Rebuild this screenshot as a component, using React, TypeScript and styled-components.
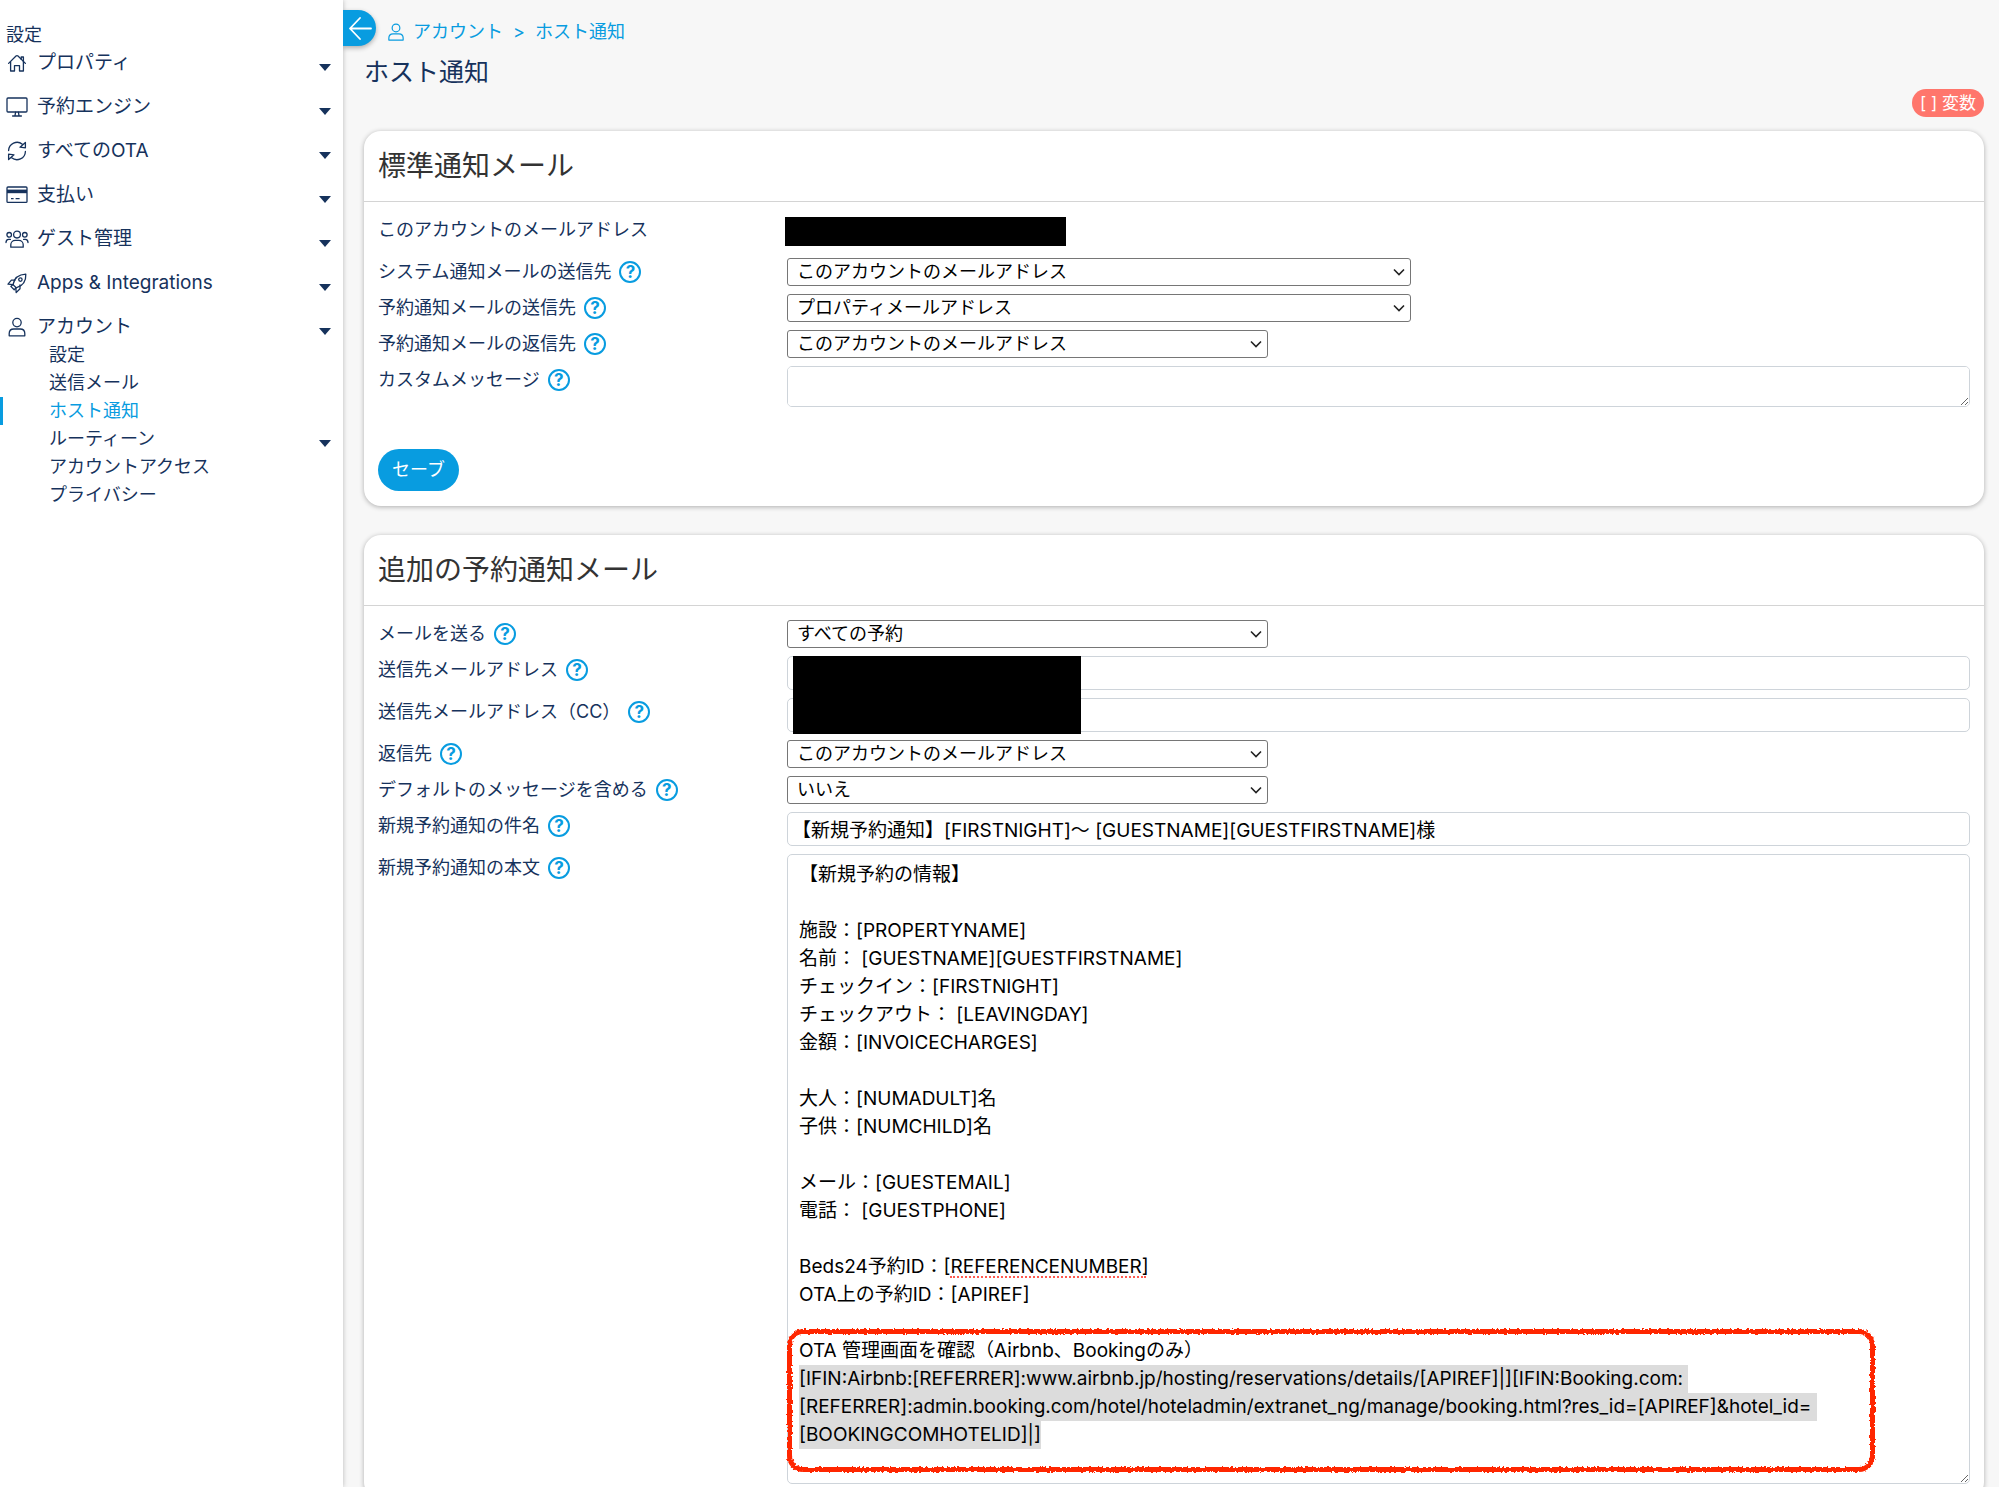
import React, { useEffect, useRef } from 'react';
import styled, { createGlobalStyle } from 'styled-components';

const color = {
  blue: '#089ce0',
  navy: '#16325c',
  page: '#f7f7f7',
  line: '#d4d4d4',
  fieldLine: '#ced4da',
  coral: '#ff766c',
};

const font = 'Inter, "Noto Sans CJK JP", sans-serif';

const GlobalStyle = createGlobalStyle`
  *, *::before, *::after { box-sizing: border-box; }
  body { margin: 0; background: ${color.page}; color: ${color.navy}; font: 18px/28px ${font}; }
  button, input, select, textarea { font: inherit; color: inherit; margin: 0; }
  a { color: inherit; text-decoration: none; }
  ul, ol { list-style: none; margin: 0; padding: 0; }
  h1, h2 { margin: 0; font-weight: 400; }
`;

/* ---------- icons ---------- */

const IconBox = styled.svg<{ $size: number }>`
  display: block;
  flex: none;
  width: ${(p) => p.$size}px;
  height: ${(p) => p.$size}px;
  fill: none;
  stroke: currentColor;
  stroke-width: 1.3;
  stroke-linecap: round;
  stroke-linejoin: round;
`;

type IconName = 'house' | 'display' | 'repeat' | 'card' | 'people' | 'rocket' | 'person';

const iconShapes: Record<IconName, React.ReactNode> = {
  house: (
    <>
      <path d="M3.6 12.4 11 5a1.4 1.4 0 0 1 2 0l7.4 7.4" />
      <path d="M5.6 10.8v9.2h3.9v-5.4h5v5.4h3.9v-9.2" />
      <path d="M16.2 8.2V6h2.2v4.4" />
    </>
  ),
  display: (
    <>
      <rect x="2" y="3" width="20" height="14" rx="1" />
      <path d="M10.6 17.2 10 20.6M13.4 17.2l.6 3.4M7.6 21h8.8" />
    </>
  ),
  repeat: (
    <>
      <path d="M3.6 11.6A8.5 8.5 0 0 1 17.4 5.2" />
      <path d="M20.4 3.4v5.4l-5.4-.6z" />
      <path d="M20.4 12.4A8.5 8.5 0 0 1 6.6 18.8" />
      <path d="M3.6 20.6v-5.4l5.4.6z" />
    </>
  ),
  card: (
    <>
      <rect x="2" y="4" width="20" height="15.4" rx="1" />
      <path d="M2 8.4h20" strokeWidth="3.6" strokeLinecap="butt" />
      <path d="M6 15.6h2.6M10.6 15.6h4" strokeLinecap="butt" />
    </>
  ),
  people: (
    <>
      <circle cx="12" cy="7.6" r="3.4" />
      <path d="M5.8 20.2v-2.4c0-2.6 2-4.4 4.4-4.4h3.6c2.4 0 4.4 1.8 4.4 4.4v2.4z" />
      <circle cx="4.2" cy="7.8" r="2.3" />
      <circle cx="19.8" cy="7.8" r="2.3" />
      <path d="M1 15.6c0-2 1-3.2 2.6-3.2h1.8M23 15.6c0-2-1-3.2-2.6-3.2h-1.8" />
    </>
  ),
  rocket: (
    <>
      <path d="M8 13.6C9 8 12.8 3.6 20.8 3.200c.4 8-4 12-9.600 13.600z" />
      <circle cx="15.400" cy="8.600" r="1.700" />
      <path d="M10 9.200H6.400L3 13.200l5 .4M15 14v3.800L11.200 21.600l-.4-5" />
      <path d="M8 13.600l-2.200 1.800 3.400 3.400 2-2.200" />
    </>
  ),
  person: (
    <>
      <circle cx="12" cy="7.600" r="4.200" />
      <path d="M4.200 20.800v-2.200c0-2.800 2-4.600 4.600-4.600h6.400c2.600 0 4.600 1.800 4.600 4.600v2.200z" />
    </>
  ),
};

const Icon = ({ name, size = 24 }: { name: IconName; size?: number }) => (
  <IconBox viewBox="0 0 24 24" $size={size} aria-hidden="true">
    {iconShapes[name]}
  </IconBox>
);

/* ---------- shell ---------- */

const Shell = styled.div`
  display: flex;
  height: 100vh;
  overflow: hidden;
`;

const Sidebar = styled.nav`
  flex: none;
  width: 343px;
  padding-top: 21px;
  background: #fff;
  box-shadow: 0 0 5px rgba(0, 0, 0, 0.25);
  font-size: 19px;
`;

const SidebarTitle = styled.div`
  padding-left: 6px;
  font-size: 18px;
`;

const NavList = styled.ul`
  display: grid;
  gap: 16px;
`;

const NavButton = styled.button`
  display: flex;
  align-items: center;
  gap: 8px;
  width: 100%;
  padding: 0 12px 0 5px;
  border: 0;
  background: none;
  line-height: 28px;
  text-align: left;
  cursor: pointer;
`;

const NavLink = styled.a<{ $active?: boolean }>`
  display: flex;
  align-items: center;
  padding: 0 12px 0 46px;
  border-left: 3px solid ${(p) => (p.$active ? color.blue : 'transparent')};
  color: ${(p) => (p.$active ? color.blue : 'inherit')};
  font-size: 18px;
`;

const Caret = styled.span`
  margin: 8px 0 0 auto;
  border: 6px solid transparent;
  border-top: 7px solid ${color.navy};
  border-bottom: 0;
`;

const Main = styled.main`
  flex: 1;
  min-width: 0;
  padding-top: 10px;
  overflow-y: auto;
  scrollbar-width: none;
`;

const TopBar = styled.header`
  display: flex;
  align-items: flex-start;
  gap: 9px;
`;

const CollapseButton = styled.button`
  display: grid;
  place-items: center;
  width: 33px;
  height: 36px;
  padding: 0;
  border: 0;
  border-radius: 0 18px 18px 0;
  background: ${color.blue};
  color: #fff;
  box-shadow: 0 2px 5px rgba(0, 0, 0, 0.3);
  cursor: pointer;
`;

const Breadcrumb = styled.nav`
  display: flex;
  align-items: center;
  gap: 6px;
  padding-top: 8px;
  color: ${color.blue};
`;

const Separator = styled.span`
  padding: 0 4px;
`;

const Content = styled.div`
  padding: 9px 15px 0 21px;
`;

const PageTitle = styled.h1`
  font-size: 25px;
  line-height: 34px;
`;

const Tools = styled.div`
  display: flex;
  justify-content: flex-end;
`;

const VariablesButton = styled.button`
  padding: 0 8px;
  border: 0;
  border-radius: 14px;
  background: ${color.coral};
  color: #fff;
  font-size: 17px;
  line-height: 28px;
  cursor: pointer;
`;

/* ---------- cards and form rows ---------- */

const Card = styled.section`
  margin: 14px 0 29px;
  border-radius: 17px;
  background: #fff;
  box-shadow: 0 1px 5px rgba(0, 0, 0, 0.3);
`;

const CardTitle = styled.h2`
  padding: 0 14px;
  border-bottom: 1px solid ${color.line};
  color: #333;
  font-size: 28px;
  line-height: 70px;
`;

const Form = styled.form`
  display: grid;
  gap: 8px;
  padding: 14px 14px 15px;
`;

const FormRow = styled.div`
  display: grid;
  grid-template-columns: 400px minmax(0, 1fr);
  column-gap: 9px;
  align-items: start;
`;

const LabelCell = styled.div`
  display: flex;
  align-items: center;
  gap: 8px;
`;

const HelpButton = styled.button`
  display: grid;
  place-items: center;
  width: 22px;
  height: 22px;
  padding: 0;
  border: 2px solid ${color.blue};
  border-radius: 50%;
  background: none;
  color: ${color.blue};
  font-size: 17px;
  font-weight: 700;
  line-height: 18px;
  cursor: pointer;
`;

const SelectBox = styled.span<{ $wide?: boolean }>`
  position: relative;
  display: block;
  width: ${(p) => (p.$wide ? 624 : 481)}px;
  max-width: 100%;
  color: #000;
`;

const Select = styled.select`
  display: block;
  width: 100%;
  height: 28px;
  padding: 0 28px 0 9px;
  appearance: none;
  border: 1px solid #767676;
  border-radius: 3px;
  background: #fff;
  line-height: 26px;
`;

const Chevron = styled.svg`
  position: absolute;
  top: 10px;
  right: 6px;
  width: 12px;
  height: 9px;
  fill: none;
  stroke: #222;
  stroke-width: 1.6;
  pointer-events: none;
`;

const TextInput = styled.input`
  display: block;
  width: 100%;
  height: 34px;
  padding: 0 4px 2px;
  border: 1px solid ${color.fieldLine};
  border-radius: 5px;
  background: #fff;
  color: #000;
  font-size: 19px;
`;

const TextBox = styled.textarea<{ $height: number }>`
  display: block;
  width: 100%;
  height: ${(p) => p.$height}px;
  padding: 6px 11px;
  border: 1px solid ${color.fieldLine};
  border-radius: 5px;
  outline: none;
  background: #fff;
  color: #000;
  caret-color: transparent;
  font-size: 19px;
  line-height: 28px;
  resize: vertical;

  &::selection {
    background: #dcdcdc;
    color: #000;
  }
`;

const Overlaid = styled.div`
  position: relative;
`;

const AccountMask = styled.div`
  width: 281px;
  height: 29px;
  margin: 1px 0 4px -2px;
  background: #000;
`;

const EmailFields = styled.div`
  position: relative;
  display: grid;
  gap: 8px;
`;

const EmailMask = styled.div`
  position: absolute;
  top: 0;
  left: 415px;
  width: 288px;
  height: 78px;
  background: #000;
`;

const SpellingMark = styled.span`
  position: absolute;
  top: 422px;
  left: 163px;
  width: 196px;
  border-top: 2px dotted #ff5a50;
  pointer-events: none;
`;

const MarkerFrame = styled.span`
  position: absolute;
  right: 95px;
  bottom: 12px;
  left: 0;
  height: 143px;
  border: 5px solid #ff2600;
  border-radius: 16px;
  filter: url(#marker-edge);
  pointer-events: none;
`;

const FilterDefs = styled.svg`
  position: absolute;
  width: 0;
  height: 0;
`;

const Actions = styled.div`
  padding-top: 34px;
`;

const SaveButton = styled.button`
  height: 42px;
  padding: 0 14px;
  border: 0;
  border-radius: 21px;
  background: ${color.blue};
  color: #fff;
  cursor: pointer;
`;

/* ---------- content ---------- */

const sections: { icon: IconName; label: string }[] = [
  { icon: 'house', label: 'プロパティ' },
  { icon: 'display', label: '予約エンジン' },
  { icon: 'repeat', label: 'すべてのOTA' },
  { icon: 'card', label: '支払い' },
  { icon: 'people', label: 'ゲスト管理' },
  { icon: 'rocket', label: 'Apps & Integrations' },
];

const accountPages = [
  { label: '設定' },
  { label: '送信メール' },
  { label: 'ホスト通知', active: true },
  { label: 'ルーティーン', more: true },
  { label: 'アカウントアクセス' },
  { label: 'プライバシー' },
];

const ACCOUNT_EMAIL = 'このアカウントのメールアドレス';
const PROPERTY_EMAIL = 'プロパティメールアドレス';

const messageIntro = [
  '【新規予約の情報】',
  '',
  '施設：[PROPERTYNAME]',
  '名前： [GUESTNAME][GUESTFIRSTNAME]',
  'チェックイン：[FIRSTNIGHT]',
  'チェックアウト： [LEAVINGDAY]',
  '金額：[INVOICECHARGES]',
  '',
  '大人：[NUMADULT]名',
  '子供：[NUMCHILD]名',
  '',
  'メール：[GUESTEMAIL]',
  '電話： [GUESTPHONE]',
  '',
  'Beds24予約ID：[REFERENCENUMBER]',
  'OTA上の予約ID：[APIREF]',
  '',
  'OTA 管理画面を確認（Airbnb、Bookingのみ）',
  '',
].join('\n');

const messageLinks = [
  '[IFIN:Airbnb:[REFERRER]:www.airbnb.jp/hosting/reservations/details/[APIREF]|][IFIN:Booking.com:',
  '[REFERRER]:admin.booking.com/hotel/hoteladmin/extranet_ng/manage/booking.html?res_id=[APIREF]&hotel_id=',
  '[BOOKINGCOMHOTELID]|]',
].join('\n');

const message = messageIntro + messageLinks;

type FieldProps = { id: string; label: string; children: React.ReactNode };

const Field = ({ id, label, children }: FieldProps) => (
  <FormRow>
    <LabelCell>
      <label htmlFor={id}>{label}</label>
      <HelpButton type="button" aria-label={`${label} ヘルプ`}>
        ?
      </HelpButton>
    </LabelCell>
    {children}
  </FormRow>
);

const SelectField = ({
  id,
  label,
  options,
  wide,
}: {
  id: string;
  label: string;
  options: string[];
  wide?: boolean;
}) => (
  <Field id={id} label={label}>
    <SelectBox $wide={wide}>
      <Select id={id} defaultValue={options[0]}>
        {options.map((option) => (
          <option key={option}>{option}</option>
        ))}
      </Select>
      <Chevron viewBox="0 0 12 9" aria-hidden="true">
        <path d="M1 1.500 6 6.500l5-5" />
      </Chevron>
    </SelectBox>
  </Field>
);

const MessageBody = () => {
  const ref = useRef<HTMLTextAreaElement>(null);

  useEffect(() => {
    ref.current?.focus({ preventScroll: true });
    ref.current?.setSelectionRange(messageIntro.length, message.length);
  }, []);

  return (
    <Overlaid>
      <TextBox id="body" ref={ref} $height={630} defaultValue={message} />
      <SpellingMark />
      <MarkerFrame />
      <FilterDefs aria-hidden="true">
        <filter id="marker-edge" x="-2%" y="-6%" width="104%" height="112%">
          <feTurbulence type="fractalNoise" baseFrequency="0.4" numOctaves="2" seed="4" />
          <feDisplacementMap in="SourceGraphic" scale="4" xChannelSelector="R" yChannelSelector="G" />
        </filter>
      </FilterDefs>
    </Overlaid>
  );
};

export default function App() {
  return (
    <>
      <GlobalStyle />
      <Shell>
        <Sidebar aria-label="設定">
          <SidebarTitle>設定</SidebarTitle>
          <NavList>
            {sections.map((section) => (
              <li key={section.label}>
                <NavButton type="button">
                  <Icon name={section.icon} />
                  {section.label}
                  <Caret />
                </NavButton>
              </li>
            ))}
            <li>
              <NavButton type="button" aria-expanded="true">
                <Icon name="person" />
                アカウント
                <Caret />
              </NavButton>
              <ul>
                {accountPages.map((page) => (
                  <li key={page.label}>
                    <NavLink href="#" $active={page.active}>
                      {page.label}
                      {page.more && <Caret />}
                    </NavLink>
                  </li>
                ))}
              </ul>
            </li>
          </NavList>
        </Sidebar>

        <Main>
          <TopBar>
            <CollapseButton type="button" aria-label="メニューを閉じる">
              <IconBox viewBox="0 0 24 24" $size={24} aria-hidden="true">
                <path d="M23 12.500H2M12 2 2 12.500 12 23" strokeWidth="1.800" />
              </IconBox>
            </CollapseButton>
            <Breadcrumb aria-label="パンくず">
              <Icon name="person" size={22} />
              <a href="#">アカウント</a>
              <Separator>&gt;</Separator>
              <a href="#">ホスト通知</a>
            </Breadcrumb>
          </TopBar>

          <Content>
            <PageTitle>ホスト通知</PageTitle>
            <Tools>
              <VariablesButton type="button">[ ] 変数</VariablesButton>
            </Tools>

            <Card>
              <CardTitle>標準通知メール</CardTitle>
              <Form>
                <FormRow>
                  <LabelCell>このアカウントのメールアドレス</LabelCell>
                  <AccountMask />
                </FormRow>
                <SelectField
                  id="system-to"
                  label="システム通知メールの送信先"
                  options={[ACCOUNT_EMAIL, PROPERTY_EMAIL]}
                  wide
                />
                <SelectField
                  id="booking-to"
                  label="予約通知メールの送信先"
                  options={[PROPERTY_EMAIL, ACCOUNT_EMAIL]}
                  wide
                />
                <SelectField
                  id="booking-reply"
                  label="予約通知メールの返信先"
                  options={[ACCOUNT_EMAIL, PROPERTY_EMAIL]}
                />
                <Field id="custom" label="カスタムメッセージ">
                  <TextBox id="custom" $height={41} />
                </Field>
                <Actions>
                  <SaveButton type="button">セーブ</SaveButton>
                </Actions>
              </Form>
            </Card>

            <Card>
              <CardTitle>追加の予約通知メール</CardTitle>
              <Form>
                <SelectField id="send" label="メールを送る" options={['すべての予約']} />
                <EmailFields>
                  <Field id="to" label="送信先メールアドレス">
                    <TextInput id="to" type="email" />
                  </Field>
                  <Field id="cc" label="送信先メールアドレス（CC）">
                    <TextInput id="cc" type="email" />
                  </Field>
                  <EmailMask />
                </EmailFields>
                <SelectField id="reply" label="返信先" options={[ACCOUNT_EMAIL, PROPERTY_EMAIL]} />
                <SelectField
                  id="include"
                  label="デフォルトのメッセージを含める"
                  options={['いいえ', 'はい']}
                />
                <Field id="subject" label="新規予約通知の件名">
                  <TextInput
                    id="subject"
                    type="text"
                    defaultValue="【新規予約通知】[FIRSTNIGHT]～ [GUESTNAME][GUESTFIRSTNAME]様"
                  />
                </Field>
                <Field id="body" label="新規予約通知の本文">
                  <MessageBody />
                </Field>
              </Form>
            </Card>
          </Content>
        </Main>
      </Shell>
    </>
  );
}
